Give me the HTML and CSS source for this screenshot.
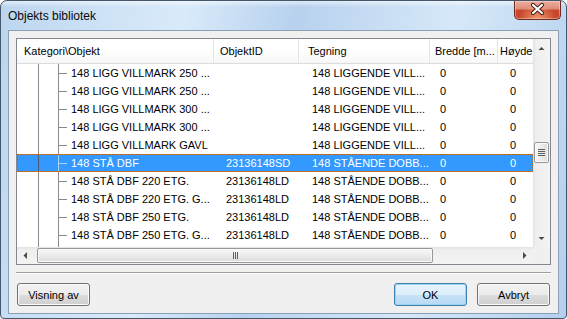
FILE: index.html
```html
<!DOCTYPE html>
<html lang="no">

<head>
  <meta charset="UTF-8">
  <meta name="viewport" content="width=device-width, initial-scale=1.0">
  <title>Objekts bibliotek</title>
  <link rel="stylesheet" href="styles.css">
</head>

<body>
  <div class="window">
    <div class="titlebar">
      <span class="title">Objekts bibliotek</span>
      <div class="close">
        <svg width="47" height="19" viewBox="0 0 47 19">
          <path d="M19 5 L28 13 M28 5 L19 13" stroke="#4a1a12" stroke-width="4.2" stroke-linecap="round" fill="none" />
          <path d="M19 5 L28 13 M28 5 L19 13" stroke="#fff" stroke-width="2.2" stroke-linecap="round" fill="none" />
        </svg>
      </div>
    </div>

    <div class="client">
      <div class="listview">
        <div class="lv-main">
          <div class="lv-header">
            <div class="hcol h1">Kategori\Objekt</div>
            <div class="hcol h2">ObjektID</div>
            <div class="hcol h3">Tegning</div>
            <div class="hcol h4">Bredde [m...</div>
            <div class="hcol h5">Høyde</div>
          </div>

          <div class="row">
            <div class="cell tree">148 LIGG VILLMARK 250 ...</div>
            <div class="cell c2"></div>
            <div class="cell c3">148 LIGGENDE VILL...</div>
            <div class="cell c4">0</div>
            <div class="cell c5">0</div>
          </div>
          <div class="row">
            <div class="cell tree">148 LIGG VILLMARK 250 ...</div>
            <div class="cell c2"></div>
            <div class="cell c3">148 LIGGENDE VILL...</div>
            <div class="cell c4">0</div>
            <div class="cell c5">0</div>
          </div>
          <div class="row">
            <div class="cell tree">148 LIGG VILLMARK 300 ...</div>
            <div class="cell c2"></div>
            <div class="cell c3">148 LIGGENDE VILL...</div>
            <div class="cell c4">0</div>
            <div class="cell c5">0</div>
          </div>
          <div class="row">
            <div class="cell tree">148 LIGG VILLMARK 300 ...</div>
            <div class="cell c2"></div>
            <div class="cell c3">148 LIGGENDE VILL...</div>
            <div class="cell c4">0</div>
            <div class="cell c5">0</div>
          </div>
          <div class="row">
            <div class="cell tree">148 LIGG VILLMARK GAVL</div>
            <div class="cell c2"></div>
            <div class="cell c3">148 LIGGENDE VILL...</div>
            <div class="cell c4">0</div>
            <div class="cell c5">0</div>
          </div>
          <div class="row selected">
            <div class="cell tree">148 STÅ DBF</div>
            <div class="cell c2">23136148SD</div>
            <div class="cell c3">148 STÅENDE DOBB...</div>
            <div class="cell c4">0</div>
            <div class="cell c5">0</div>
          </div>
          <div class="row">
            <div class="cell tree">148 STÅ DBF 220 ETG.</div>
            <div class="cell c2">23136148LD</div>
            <div class="cell c3">148 STÅENDE DOBB...</div>
            <div class="cell c4">0</div>
            <div class="cell c5">0</div>
          </div>
          <div class="row">
            <div class="cell tree">148 STÅ DBF 220 ETG. G...</div>
            <div class="cell c2">23136148LD</div>
            <div class="cell c3">148 STÅENDE DOBB...</div>
            <div class="cell c4">0</div>
            <div class="cell c5">0</div>
          </div>
          <div class="row">
            <div class="cell tree">148 STÅ DBF 250 ETG.</div>
            <div class="cell c2">23136148LD</div>
            <div class="cell c3">148 STÅENDE DOBB...</div>
            <div class="cell c4">0</div>
            <div class="cell c5">0</div>
          </div>
          <div class="row">
            <div class="cell tree">148 STÅ DBF 250 ETG. G...</div>
            <div class="cell c2">23136148LD</div>
            <div class="cell c3">148 STÅENDE DOBB...</div>
            <div class="cell c4">0</div>
            <div class="cell c5">0</div>
          </div>
          <!-- neste rad er bare så vidt synlig -->
          <div class="row">
            <div class="cell tree"></div>
          </div>
        </div>

        <div class="vscroll">
          <div class="sb-btn">
            <svg width="17" height="17" viewBox="0 0 17 17"><polygon points="5.5,11 8.5,8 11.5,11" fill="#4a4a4a" /></svg>
          </div>
          <div class="vthumb">
            <svg width="15" height="21" viewBox="0 0 15 21">
              <path d="M4 7.5h7M4 9.5h7M4 11.5h7M4 13.5h7" stroke="#5d5d5d" stroke-width="1" />
            </svg>
          </div>
          <div class="sb-fill"></div>
          <div class="sb-btn">
            <svg width="17" height="17" viewBox="0 0 17 17"><polygon points="5.5,7 8.5,10 11.5,7" fill="#4a4a4a" /></svg>
          </div>
        </div>

        <div class="hscroll">
          <div class="sb-btn">
            <svg width="17" height="17" viewBox="0 0 17 17"><polygon points="10,5 6.5,8.5 10,12" fill="#4a4a4a" /></svg>
          </div>
          <div class="hthumb">
            <svg width="9" height="15" viewBox="0 0 9 15">
              <path d="M2.5 4v7M4.5 4v7M6.5 4v7" stroke="#5d5d5d" stroke-width="1" />
            </svg>
          </div>
          <div class="sb-fill"></div>
          <div class="sb-btn">
            <svg width="17" height="17" viewBox="0 0 17 17"><polygon points="7,5 10.5,8.5 7,12" fill="#4a4a4a" /></svg>
          </div>
        </div>

        <div class="corner"></div>
      </div>

      <div class="separator"></div>

      <div class="footer">
        <button class="btn">Visning av</button>
        <div class="footer-right">
          <button class="btn default">OK</button>
          <button class="btn">Avbryt</button>
        </div>
      </div>
    </div>
  </div>
</body>

</html>
```

FILE: styles.css
```css
* {
  margin: 0;
  padding: 0;
  box-sizing: border-box;
}

body {
  width: 567px;
  height: 319px;
  overflow: hidden;
  background: #fff;
  font-family: 'Liberation Sans', Arial, sans-serif;
  font-size: 11px;
  color: #000;
}

/* ramme */
.window {
  width: 567px;
  height: 319px;
  display: flex;
  flex-direction: column;
  border: 1px solid #45576b;
  border-radius: 7px 7px 4px 4px;
  background:
    linear-gradient(180deg, rgba(255, 255, 255, 0.55) 0, rgba(255, 255, 255, 0) 6px),
    linear-gradient(100deg, #bcd5ef 0%, #cfe3f7 18%, #d9eafa 30%, #b7d1ee 48%, #c9def4 62%, #d6e8f9 74%, #b4cfed 100%);
}

.titlebar {
  height: 29px;
  display: flex;
  align-items: flex-start;
  padding-left: 7px;
}

.title {
  font-size: 12px;
  line-height: 15px;
  padding-top: 8px;
  color: #0a0a0a;
}

.close {
  margin-left: auto;
  margin-right: 5px;
  width: 47px;
  height: 19px;
  border: 1px solid #6d2a1f;
  border-top: none;
  border-radius: 0 0 5px 5px;
  background:
    radial-gradient(ellipse at 50% 100%, rgba(255, 190, 140, 0.7) 0, rgba(255, 190, 140, 0) 60%),
    linear-gradient(180deg, #eab0a2 0%, #dd8a77 45%, #c9472c 50%, #c8432a 100%);
  box-shadow: inset 0 0 0 1px rgba(255, 220, 210, 0.45);
}

.close svg {
  display: block;
  margin: -1px 0 0 -1px;
}

.client {
  height: 284px;
  margin: 0 7px;
  border: 1px solid #8b9fb5;
  background: #f0f0f0;
  padding: 6px 7px 6px 7px;
  display: flex;
  flex-direction: column;
}

/* liste */
.listview {
  height: 227px;
  margin-top: 1px;
  border: 1px solid #828790;
  background: #fff;
  display: grid;
  grid-template-columns: 1fr 17px;
  grid-template-rows: 1fr 17px;
  overflow: hidden;
}

.lv-main {
  overflow: hidden;
  white-space: nowrap;
}

.lv-header,
.row {
  display: grid;
  grid-template-columns: 197px 85px 131px 68px 80px;
  width: 100%;
}

.lv-header {
  height: 25px;
  border-bottom: 1px solid #dcdcdc;
  background: linear-gradient(180deg, #fff 0%, #fff 45%, #f6f7f8 100%);
}

.hcol {
  line-height: 24px;
  border-right: 1px solid #e2e4e7;
  overflow: hidden;
}

.h1 { padding-left: 7px; }
.h2 { padding-left: 6px; }
.h3 { padding-left: 9px; }
.h4 { padding-left: 5px; }
.h5 { padding-left: 2px; border-right: none; }

.row {
  height: 18px;
  line-height: 18px;
}

.cell {
  overflow: visible;
}

.tree {
  padding-left: 54px;
  background:
    linear-gradient(#8a8a8a, #8a8a8a) 21px 0 / 1px 100% no-repeat,
    linear-gradient(#8a8a8a, #8a8a8a) 41px 0 / 1px 100% no-repeat,
    linear-gradient(#8a8a8a, #8a8a8a) 41px 9px / 9px 1px no-repeat;
}

.c2 { padding-left: 12px; }
.c3 { padding-left: 13px; }
.c4 { padding-left: 10px; }
.c5 { padding-left: 12px; }

.selected {
  background: #3399ff;
  color: #fff;
  outline: 1px dotted #b5641e;
  outline-offset: -1px;
}

.selected .tree {
  background:
    linear-gradient(#4a5a70, #4a5a70) 21px 0 / 1px 100% no-repeat,
    linear-gradient(#a9d2ff, #a9d2ff) 41px 0 / 1px 100% no-repeat,
    linear-gradient(#a9d2ff, #a9d2ff) 41px 9px / 9px 1px no-repeat;
}

/* rullefelt */
.vscroll {
  display: flex;
  flex-direction: column;
  background: linear-gradient(90deg, #e3e3e3 0, #efefef 3px, #f3f3f3 100%);
}

.hscroll {
  display: flex;
  background: linear-gradient(180deg, #e3e3e3 0, #efefef 3px, #f3f3f3 100%);
}

.sb-btn {
  width: 17px;
  height: 17px;
  flex: none;
}

.sb-btn svg {
  display: block;
}

.sb-fill {
  flex: 1;
}

.vthumb {
  margin: 86px 1px 0 1px;
  height: 21px;
  border: 1px solid #979797;
  border-radius: 2px;
  background: linear-gradient(90deg, #f7f7f7 0%, #ececec 50%, #dadada 100%);
  box-shadow: inset 0 0 0 1px #fafafa;
}

.vthumb svg {
  display: block;
  margin: -1px 0 0 -1px;
}

.hthumb {
  margin: 1px 0 1px 3px;
  width: 396px;
  border: 1px solid #979797;
  border-radius: 2px;
  background: linear-gradient(180deg, #f7f7f7 0%, #ececec 50%, #dadada 100%);
  box-shadow: inset 0 0 0 1px #fafafa;
  display: flex;
  justify-content: center;
  align-items: center;
}

.hthumb svg {
  display: block;
}

.corner {
  background: #f0f0f0;
}

.separator {
  margin-top: 7px;
  height: 2px;
  border-top: 1px solid #a0a0a0;
  border-bottom: 1px solid #fff;
}

/* knapper */
.footer {
  margin-top: 9px;
  padding: 0 1px;
  display: flex;
  justify-content: space-between;
}

.footer-right {
  display: flex;
  gap: 10px;
}

.btn {
  width: 73px;
  height: 23px;
  border: 1px solid #707070;
  border-radius: 3px;
  background: linear-gradient(180deg, #f2f2f2 0%, #ebebeb 50%, #dddddd 51%, #cfcfcf 100%);
  box-shadow: inset 0 0 0 1px #fbfbfb;
  font-family: 'Liberation Sans', Arial, sans-serif;
  font-size: 11px;
  color: #000;
}

.btn.default {
  border-color: #3c7fb1;
  background: linear-gradient(180deg, #eaf5fd 0%, #dcedfb 50%, #c6e2f8 51%, #b8daf5 100%);
  box-shadow: inset 0 0 0 1px #9fd3f2;
}
```
